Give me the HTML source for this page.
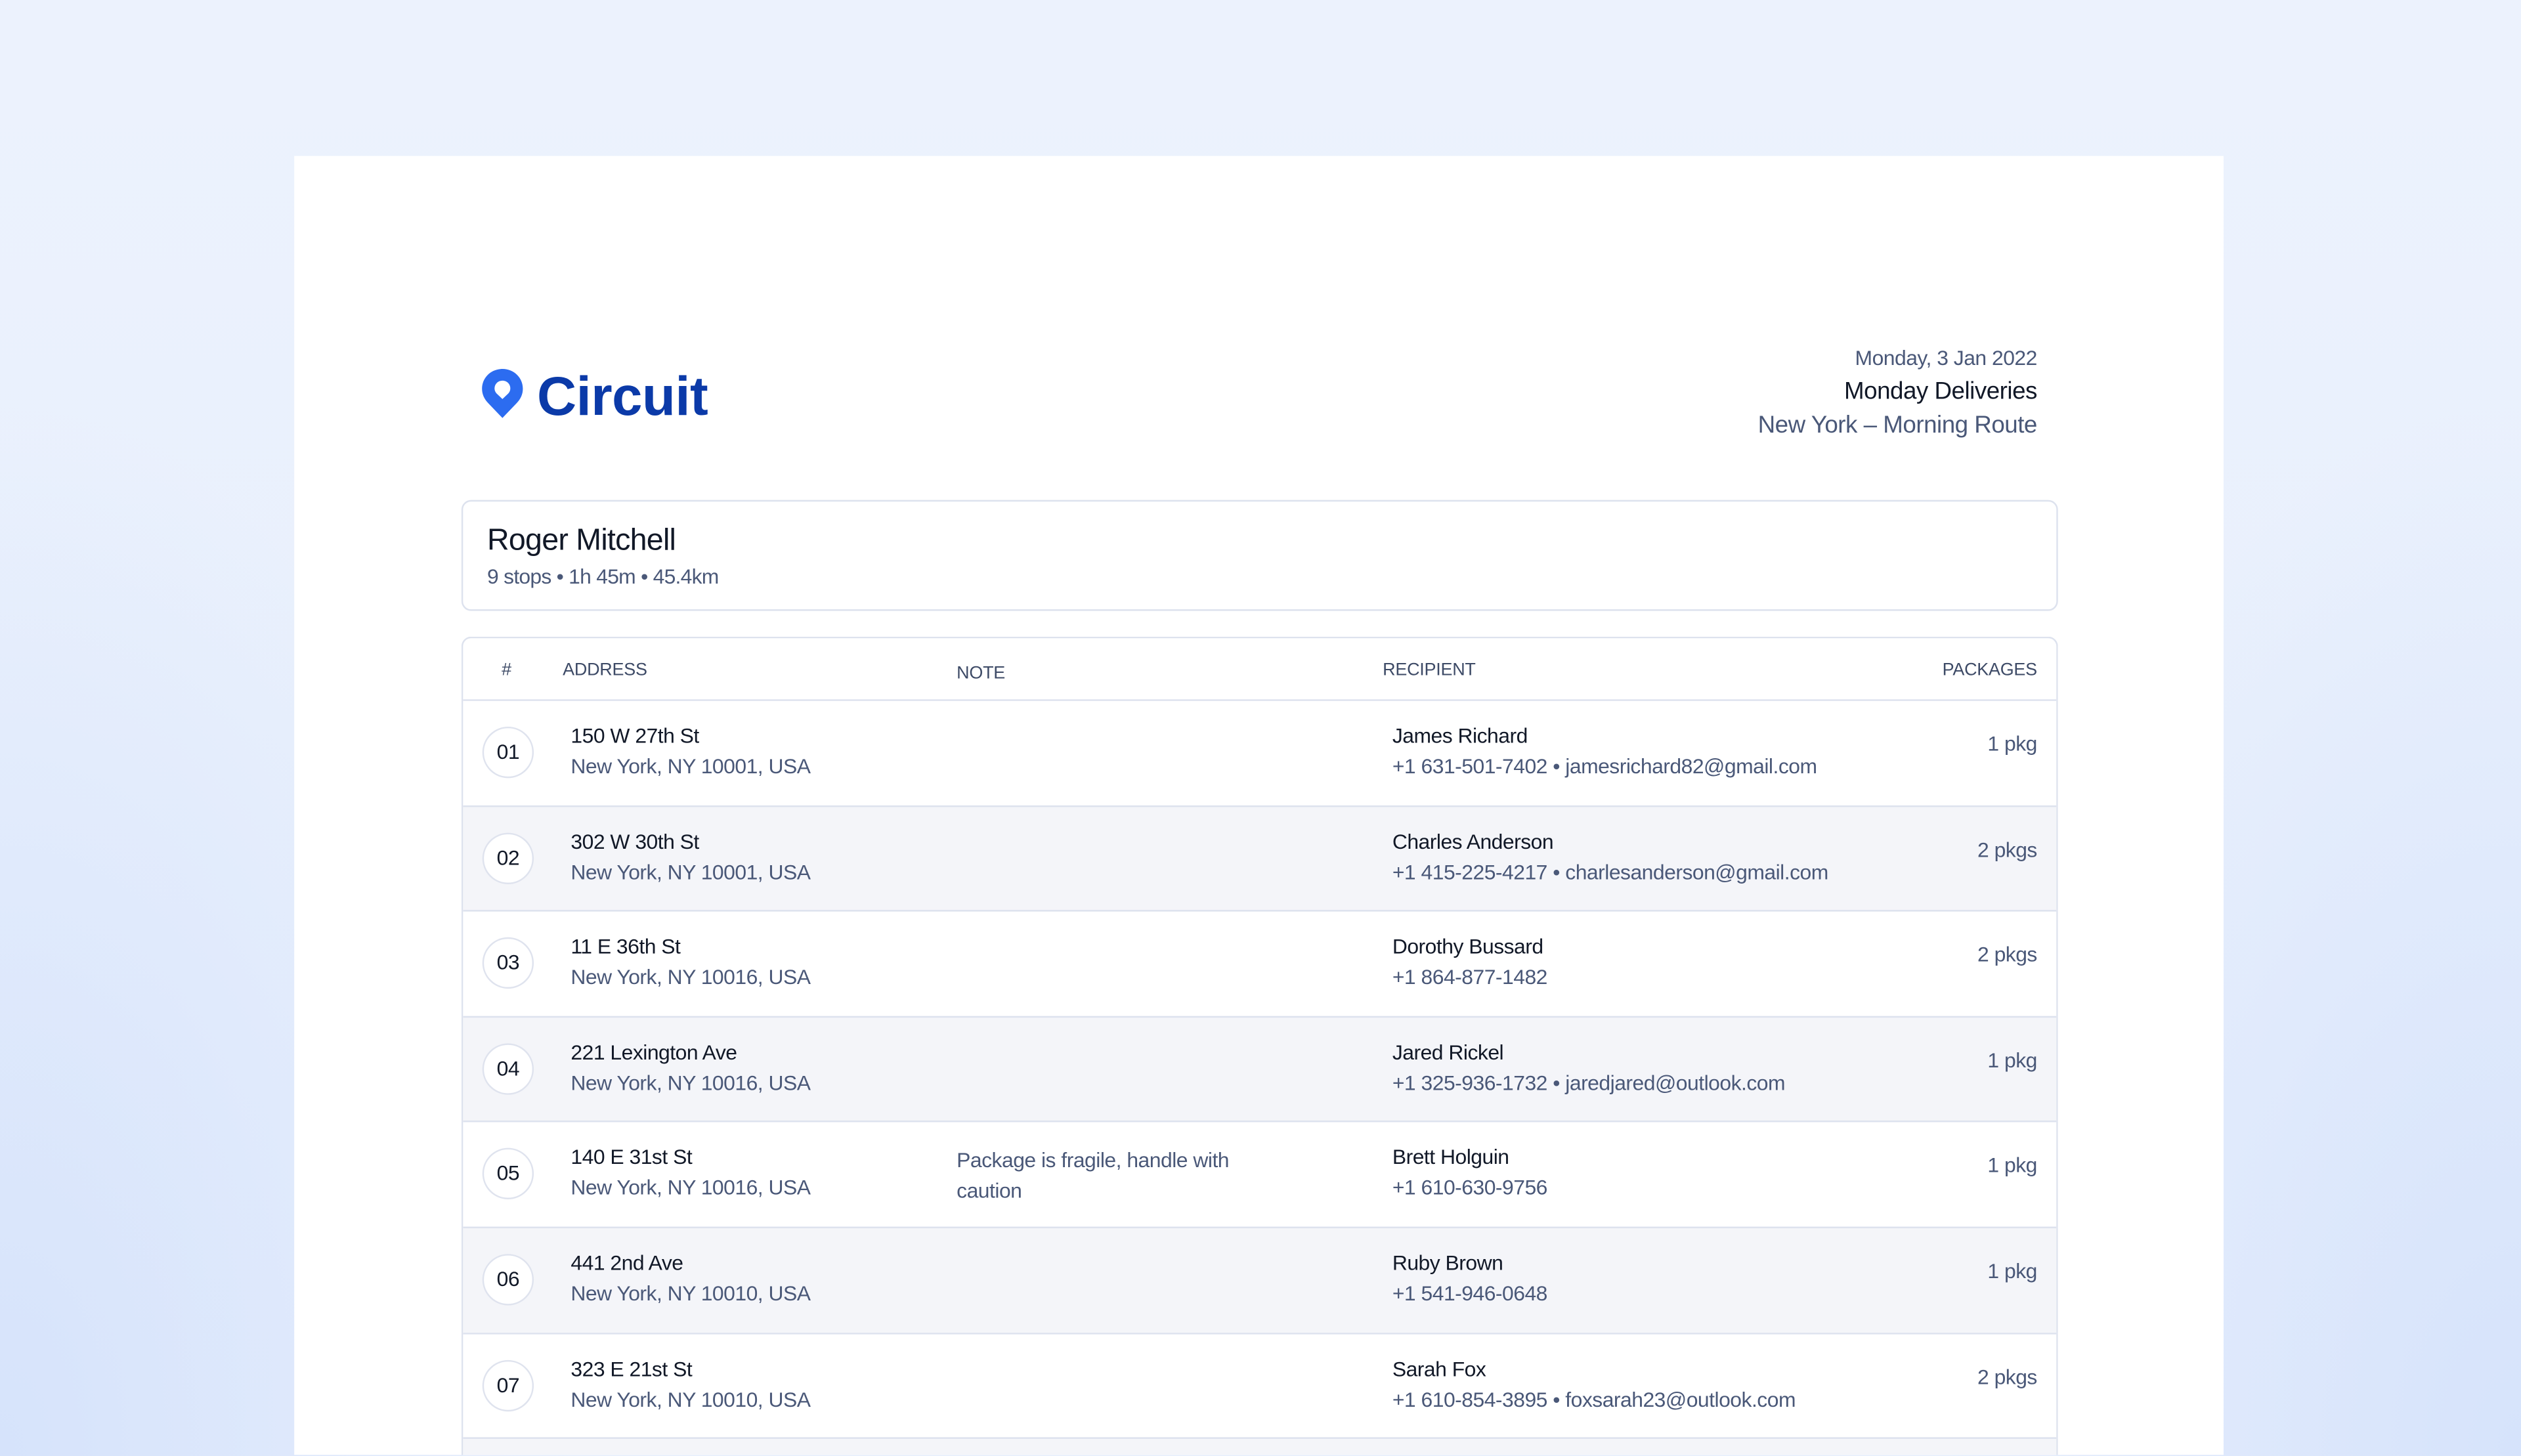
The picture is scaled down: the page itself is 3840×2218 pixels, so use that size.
<!DOCTYPE html>
<html><head><meta charset="utf-8">
<style>
html,body{margin:0;padding:0;}
html{overflow:hidden;height:2218px;}
body{width:3840px;height:2218px;overflow:hidden;background:#e9f0fd;font-family:"Liberation Sans",Arial,sans-serif;position:relative;}
.bg{position:absolute;inset:0;background:
 radial-gradient(ellipse 900px 1600px at 0px 2218px,#d6e3fb 0%,rgba(214,227,251,0) 100%),
 radial-gradient(ellipse 900px 1600px at 3840px 2218px,#d6e3fb 0%,rgba(214,227,251,0) 100%),
 linear-gradient(#ecf2fd,#e6eefc);}
.s{position:absolute;left:0;top:0;width:1568px;height:905px;transform:scale(2.449);transform-origin:0 0;overflow:hidden;}
.card{position:absolute;left:183px;top:97px;width:1200px;height:808px;background:#fff;}
.a{position:absolute;white-space:nowrap;}
.r{text-align:right;}
.sum{position:absolute;left:287px;top:311px;width:991px;height:67px;border:1px solid #dde2ee;border-radius:6px;background:#fff;}
.tbl{position:absolute;left:287px;top:396px;width:991px;height:509px;border:1px solid #dde2ee;border-bottom:none;border-radius:6px 6px 0 0;overflow:hidden;background:#fff;}
.hd{position:absolute;font-size:11px;color:#3d4a66;letter-spacing:-0.1px;}
.row{position:absolute;left:0;width:991px;height:65px;border-top:1px solid #dde2ee;}
.row.g{background:#f4f5f9;}
.row.last{height:10px;}
.c{position:absolute;left:12px;top:16px;width:30px;height:30px;border:1px solid #dfe3ee;border-radius:50%;background:#fff;font-size:13px;line-height:30px;text-align:center;color:#111827;letter-spacing:-0.2px;}
.l1{position:absolute;font-size:13px;color:#111827;top:14px;letter-spacing:-0.2px;}
.l2{position:absolute;font-size:13px;color:#4a5878;top:33px;letter-spacing:-0.2px;}
.pk{position:absolute;right:12px;top:19px;font-size:13px;color:#4a5878;letter-spacing:-0.2px;}
</style></head><body>
<div class="bg"></div>
<div class="s">
<div class="card"></div>
<svg class="a" style="left:299px;top:229px" width="27" height="32" viewBox="0 0 27 32">
<path d="M13.5 0.5C6.3 0.5 0.8 6 0.8 12.8c0 3.6 1.5 6.6 3.9 9L13.5 31l8.8-9.2c2.4-2.4 3.9-5.4 3.9-9C26.2 6 20.7 0.5 13.5 0.5z" fill="#2c6cf0"/>
<path d="M13.5 7.8c-2.8 0-4.9 2.1-4.9 4.8 0 1.3 0.5 2.4 1.4 3.3l3.5 3.3 3.5-3.3c0.9-0.9 1.4-2 1.4-3.3 0-2.7-2.1-4.8-4.9-4.8z" fill="#fff"/>
</svg>
<div class="a" style="left:334px;top:227px;font-size:34px;font-weight:bold;color:#0b3aa8;letter-spacing:-0.2px;line-height:40px;">Circuit</div>
<div class="a r" style="right:301px;top:215px;font-size:13px;color:#4a5878;letter-spacing:-0.2px;">Monday, 3 Jan 2022</div>
<div class="a r" style="right:301px;top:235px;font-size:15px;color:#111827;letter-spacing:-0.2px;">Monday Deliveries</div>
<div class="a r" style="right:301px;top:256px;font-size:15px;color:#4a5878;letter-spacing:-0.2px;">New York – Morning Route</div>
<div class="sum">
<div class="a" style="left:15px;top:14px;font-size:19px;color:#111827;letter-spacing:-0.3px;">Roger Mitchell</div>
<div class="a" style="left:15px;top:39px;font-size:13px;color:#4a5878;letter-spacing:-0.3px;">9 stops • 1h 45m • 45.4km</div>
</div>
<div class="tbl">
<div class="hd" style="left:24px;top:14px;">#</div>
<div class="hd" style="left:62px;top:14px;">ADDRESS</div>
<div class="hd" style="left:307px;top:16px;">NOTE</div>
<div class="hd" style="left:572px;top:14px;">RECIPIENT</div>
<div class="hd" style="right:12px;top:14px;">PACKAGES</div>

<div class="row" style="top:38px"><div class="c">01</div><div class="l1" style="left:67px">150 W 27th St</div><div class="l2" style="left:67px">New York, NY 10001, USA</div><div class="l1" style="left:578px">James Richard</div><div class="l2" style="left:578px">+1 631-501-7402 • jamesrichard82@gmail.com</div><div class="pk">1 pkg</div></div>
<div class="row g" style="top:103.6px"><div class="c">02</div><div class="l1" style="left:67px">302 W 30th St</div><div class="l2" style="left:67px">New York, NY 10001, USA</div><div class="l1" style="left:578px">Charles Anderson</div><div class="l2" style="left:578px">+1 415-225-4217 • charlesanderson@gmail.com</div><div class="pk">2 pkgs</div></div>
<div class="row" style="top:169.2px"><div class="c">03</div><div class="l1" style="left:67px">11 E 36th St</div><div class="l2" style="left:67px">New York, NY 10016, USA</div><div class="l1" style="left:578px">Dorothy Bussard</div><div class="l2" style="left:578px">+1 864-877-1482</div><div class="pk">2 pkgs</div></div>
<div class="row g" style="top:234.8px"><div class="c">04</div><div class="l1" style="left:67px">221 Lexington Ave</div><div class="l2" style="left:67px">New York, NY 10016, USA</div><div class="l1" style="left:578px">Jared Rickel</div><div class="l2" style="left:578px">+1 325-936-1732 • jaredjared@outlook.com</div><div class="pk">1 pkg</div></div>
<div class="row" style="top:300.4px"><div class="c">05</div><div class="l1" style="left:67px">140 E 31st St</div><div class="l2" style="left:67px">New York, NY 10016, USA</div><div class="l2" style="left:307px;top:16px;">Package is fragile, handle with</div><div class="l2" style="left:307px;top:35px;">caution</div><div class="l1" style="left:578px">Brett Holguin</div><div class="l2" style="left:578px">+1 610-630-9756</div><div class="pk">1 pkg</div></div>
<div class="row g" style="top:366px"><div class="c">06</div><div class="l1" style="left:67px">441 2nd Ave</div><div class="l2" style="left:67px">New York, NY 10010, USA</div><div class="l1" style="left:578px">Ruby Brown</div><div class="l2" style="left:578px">+1 541-946-0648</div><div class="pk">1 pkg</div></div>
<div class="row" style="top:431.6px"><div class="c">07</div><div class="l1" style="left:67px">323 E 21st St</div><div class="l2" style="left:67px">New York, NY 10010, USA</div><div class="l1" style="left:578px">Sarah Fox</div><div class="l2" style="left:578px">+1 610-854-3895 • foxsarah23@outlook.com</div><div class="pk">2 pkgs</div></div>
<div class="row g last" style="top:497.2px"></div>
</div>
</div>
</body></html>
